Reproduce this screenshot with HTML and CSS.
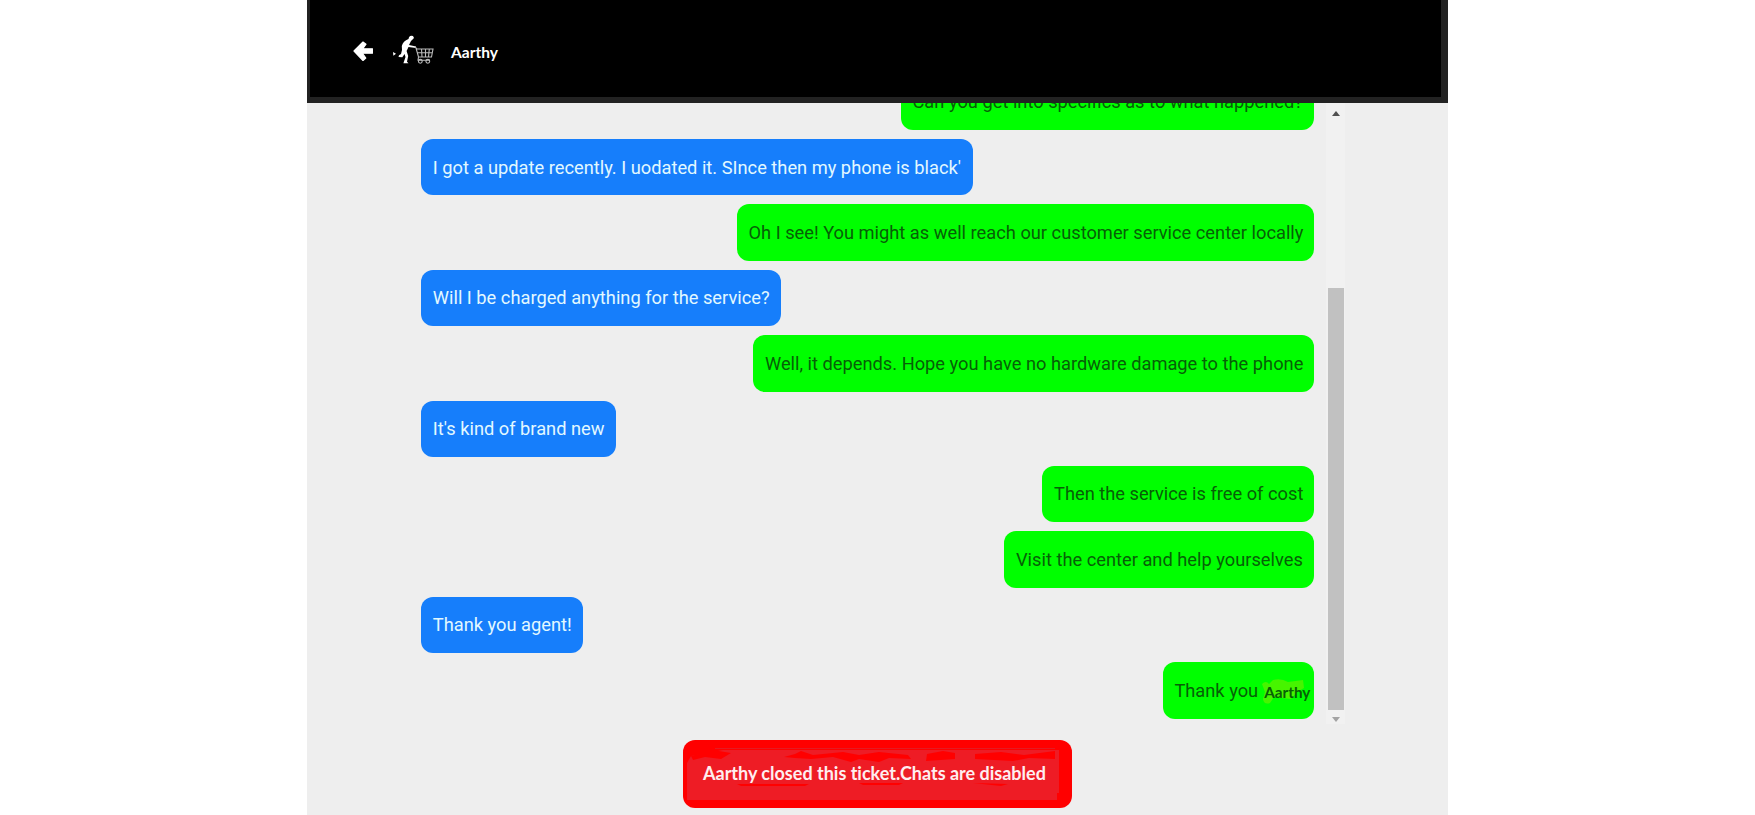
FILE: index.html
```html
<!DOCTYPE html>
<html lang="en">
<head>
<meta charset="utf-8">
<title>Support chat</title>
<link rel="stylesheet" href="styles.css">
</head>
<body>
<main class="app">
  <header class="header">
    <svg class="back" viewBox="0 0 20 20"><path d="M10 1 L1 10 L10 19.5 L12.8 17 L9.3 12.2 H19.5 V7.8 H9.6 L13 3.2Z" fill="#fff" stroke="#fff" stroke-width="1.2" stroke-linejoin="round"/></svg>
    <svg class="logo" viewBox="0 0 42 30">
      <path d="M20 1 Q17 .4 16 2.2 L15.5 4 Q10 6 8.8 11 L9 15 L8 19 L6 20.3 L5.5 22 L9.3 22.2 L11.6 19 L12.5 22 L10.4 28.3 H15.5 L14 26.8 L15.2 21 L13.6 16 L15.5 12 L23 13 V11.5 L16 10 L18 6 L21 3Z" fill="#fff"/>
      <path d="M0 17 L3 18.7 L.4 20.8Z" fill="#fff"/>
      <g fill="none" stroke="#bbb" stroke-width="1.1"><path d="M22 11.8 L24 14 H40 L38.5 22 H25.5 L23 13 M24.6 17.8 H39.2 M28.5 14 L29 22 M32.5 14 V22 M36.3 14 L35.5 22 M25.5 22 L25 25.3 H37"/><circle cx="27.3" cy="26.3" r="1.9"/><circle cx="34.8" cy="26.3" r="1.9"/></g>
    </svg>
    <span class="name">Aarthy</span>
  </header>
  <section class="chat">
    <div class="messages">
      <div class="bubble agent m0">Can you get into specifics as to what happened?</div>
      <div class="bubble user m1">I got a update recently. I uodated it. SInce then my phone is black'</div>
      <div class="bubble agent m2">Oh I see! You might as well reach our customer service center locally</div>
      <div class="bubble user m3">Will I be charged anything for the service?</div>
      <div class="bubble agent m4">Well, it depends. Hope you have no hardware damage to the phone</div>
      <div class="bubble user m5">It's kind of brand new</div>
      <div class="bubble agent m6">Then the service is free of cost</div>
      <div class="bubble agent m7">Visit the center and help yourselves</div>
      <div class="bubble user m8">Thank you agent!</div>
      <div class="bubble agent m9"><span>Thank you</span><span class="recipient"><svg class="smudge" viewBox="0 0 44 26"><path d="M1 5 Q5 1 8 5 L12 1 Q20 -1 27 3 L42 1 L43 9 L36 13 L30 20 L13 18 L9 24 Q3 26 2 20 L4 13Z" fill="#47f400"/></svg><b>Aarthy</b></span></div>
    </div>
    <div class="scrollbar"><i class="arrow up"></i><i class="thumb"></i><i class="arrow down"></i></div>
  </section>
  <footer class="footer"><div class="closed"><svg class="patch" viewBox="0 0 389 68">
      <path d="M4 23 L8 16 L40 10 H376 V60 H4Z" fill="#ee1c25"/>
      <path d="M8 16 L30 10 L48 13 L38 19 L22 17 L10 20Z M101 17 L112 14 L118 11 L130 15 L160 12 L176 15 L196 12 L225 15 L228 19 L206 18 L196 22 L176 19 L168 22 L150 17 L128 19 L112 18Z M244 14 L260 11 L272 13 V19 L243 21Z M292 14 L318 12 L341 15 L372 11 V19 L346 18 L330 21 L292 19Z M54 44 H126 L122 46 H58Z M176 43 H220 L216 45 H180Z M290 43 L325 44 L318 46Z M374 53 H376 V60 H374Z" fill="#f00"/>
      <path d="M32 8.500 H372" stroke="#e51a22"/>
    </svg><span class="closed-text">Aarthy closed this ticket.Chats are disabled</span></div></footer>
</main>
</body>
</html>
```
FILE: styles.css
```css
* { box-sizing: border-box; }
body { margin: 0; background: #fff; font-family: Roboto, sans-serif; overflow: hidden; }
.app { width: 1141px; height: 815px; margin-left: 307px; background: #eee; display: flex; flex-direction: column; }
.header { height: 103px; flex: none; background: #000; border: solid #222; border-width: 0 7px 6px 3px; display: flex; align-items: flex-start; }
.back { width: 20px; height: 20px; margin: 41px 0 0 43px; flex: none; }
.logo { width: 42px; height: 30px; margin: 35px 0 0 20px; flex: none; }
.name { font: bold 15.5px/20px Lato, sans-serif; color: #fff; margin: 42px 0 0 16px; }
.chat { height: 626px; flex: none; overflow: hidden; display: flex; align-items: stretch; padding-left: 114.3px; }
.messages { width: 893.2px; display: flex; flex-direction: column; justify-content: flex-end; gap: 9.1px; padding-bottom: 10.5px; overflow: hidden; }
.bubble { height: 56.3px; flex: none; border-radius: 12px; padding: 0 0 .4px 11.5px; display: flex; align-items: center; font-size: 18.27px; white-space: nowrap; }
.user { align-self: flex-start; background: #167efb; color: #e2f8ff; }
.agent { align-self: flex-end; background: #00ff00; color: #075f07; }
.m0 { width: 413.5px; }
.m1 { width: 551.5px; }
.m2 { width: 577.5px; }
.m3 { width: 359.5px; }
.m4 { width: 561px; }
.m5 { width: 194.5px; }
.m6 { width: 272px; }
.m7 { width: 310px; }
.m8 { width: 161.5px; }
.m9 { width: 151.6px; }
.recipient { position: relative; margin-left: 6px; }
.recipient b { position: relative; top: 1px; font: bold 15.3px/20px Lato, sans-serif; }
.smudge { position: absolute; left: -3px; top: -1px; width: 44px; height: 26px; }
.scrollbar { width: 19px; height: 621px; margin-left: 12px; background: #f1f1f1; display: flex; flex-direction: column; align-items: center; }
.arrow { border: solid transparent; border-width: 0 4.5px; }
.up { border-bottom: 5px solid #505050; margin-top: 8px; }
.thumb { width: 16px; height: 422px; margin-top: 172px; background: #c1c1c1; }
.down { border-top: 5px solid #a3a3a3; margin-top: 6.5px; }
.footer { padding: 10.5px 0 0 376px; }
.closed { position: relative; width: 389px; height: 68px; background: #f00; border-radius: 12px; padding-left: 20px; display: flex; align-items: center; }
.patch { position: absolute; left: 0; top: 0; width: 389px; height: 68px; }
.closed-text { position: relative; color: #ffeef0; font: bold 18px/24px Lato, sans-serif; font-variant-ligatures: none; white-space: nowrap; padding-bottom: 2px; }
```
